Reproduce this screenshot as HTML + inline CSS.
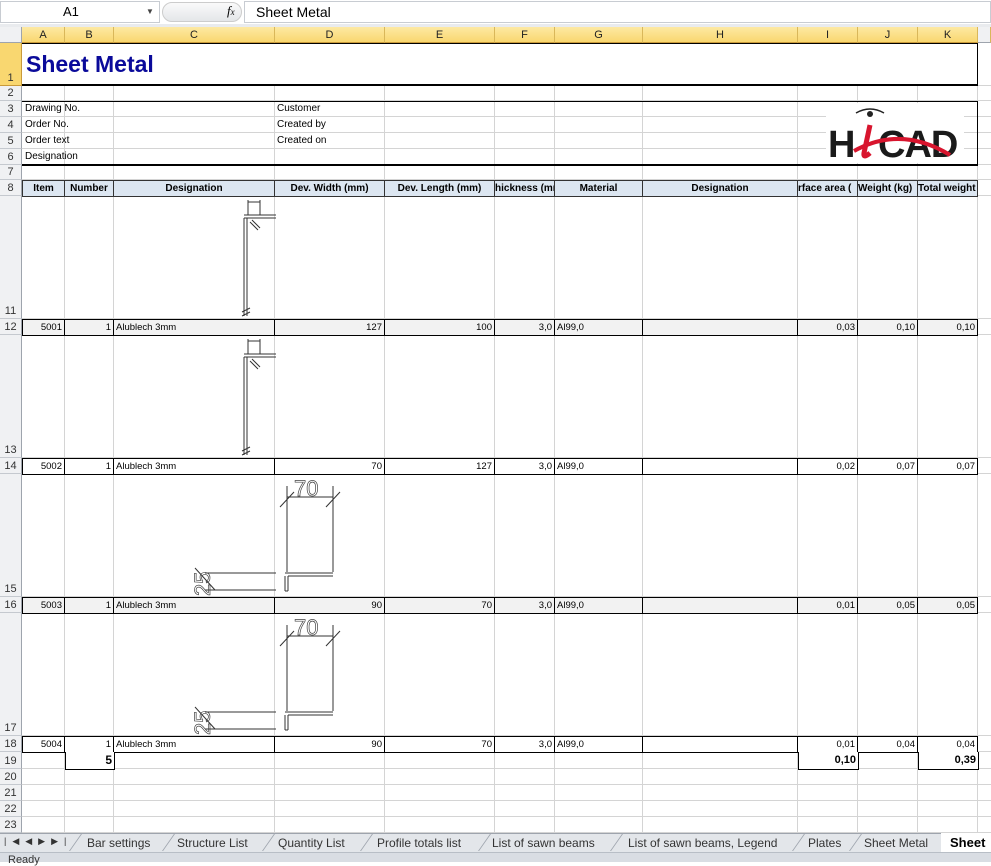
<!DOCTYPE html>
<html><head><meta charset="utf-8"><style>
*{margin:0;padding:0;box-sizing:border-box}
body{width:991px;height:862px;overflow:hidden;background:#fff;font-family:"Liberation Sans",Arial,sans-serif;position:relative}
div{position:absolute}
.v{width:1px;top:43px;height:790px;background:#d4d4d4}
.h{height:1px;left:22px;width:969px;background:#d4d4d4}
.ch{top:27px;height:16px;background:linear-gradient(#fde9a3,#f9d770);border-right:1px solid #d9b75a;border-bottom:1px solid #c99a3a;font-size:11px;color:#222;text-align:center;line-height:16px}
.rh{left:0;width:22px;background:#f0f1f3;border-bottom:1px solid #c5c9cf;border-right:1px solid #9ea4ad;font-size:11px;color:#333;text-align:center;display:flex;align-items:flex-end;justify-content:center;padding-bottom:1px}
.t{font-size:10px;color:#000;white-space:nowrap;line-height:16px}
.hd{top:180px;height:17px;background:#dce6f1;border:1px solid #333;border-left:none;font-size:10px;font-weight:bold;text-align:center;line-height:15px;overflow:hidden;white-space:nowrap}
.dc{height:17px;border:1px solid #000;border-left:none;font-size:9.5px;line-height:15px;padding:0 2px;white-space:nowrap;overflow:hidden;background:#fff}
.g{background:#f2f2f2}
.r{text-align:right}
.tab{top:835px;height:16px;font-size:12px;color:#333;line-height:16px}
.sep{top:834px;width:1px;height:17px;background:#9ea4ad;transform:skewX(-35deg)}
</style></head><body>
<div style="left:0;top:0;width:991px;height:27px;background:#fff;border-bottom:1px solid #c6cbd2"></div>
<div style="left:0;top:1px;width:160px;height:22px;border:1px solid #c8ccd2;font-size:13px;line-height:20px;padding-left:62px">A1</div>
<div style="left:146px;top:7px;font-size:8px;color:#444">▼</div>
<div style="left:162px;top:2px;width:80px;height:20px;border-radius:10px;background:linear-gradient(#fafafa,#e4e6e9);border:1px solid #ccc"></div>
<div style="left:227px;top:3px;font-family:'Liberation Serif',serif;font-style:italic;font-size:13px">f<span style="font-size:9px">x</span></div>
<div style="left:244px;top:1px;width:747px;height:22px;border:1px solid #c8ccd2;font-size:14px;line-height:20px;padding-left:11px">Sheet Metal</div>
<div style="left:0;top:24px;width:991px;height:3px;background:#e9ebee"></div>
<div style="left:0;top:27px;width:22px;height:16px;background:#f0f1f3;border-right:1px solid #9ea4ad;border-bottom:1px solid #9ea4ad"></div>
<div class="ch" style="left:22px;width:43px">A</div>
<div class="ch" style="left:65px;width:49px">B</div>
<div class="ch" style="left:114px;width:161px">C</div>
<div class="ch" style="left:275px;width:110px">D</div>
<div class="ch" style="left:385px;width:110px">E</div>
<div class="ch" style="left:495px;width:60px">F</div>
<div class="ch" style="left:555px;width:88px">G</div>
<div class="ch" style="left:643px;width:155px">H</div>
<div class="ch" style="left:798px;width:60px">I</div>
<div class="ch" style="left:858px;width:60px">J</div>
<div class="ch" style="left:918px;width:60px">K</div>
<div class="ch" style="left:978px;width:13px;background:#f0f1f3;border-bottom-color:#9ea4ad"></div>
<div class="v" style="left:64px"></div><div class="v" style="left:113px"></div><div class="v" style="left:274px"></div><div class="v" style="left:384px"></div><div class="v" style="left:494px"></div><div class="v" style="left:554px"></div><div class="v" style="left:642px"></div><div class="v" style="left:797px"></div><div class="v" style="left:857px"></div><div class="v" style="left:917px"></div><div class="v" style="left:977px"></div>
<div class="h" style="top:85px"></div><div class="h" style="top:100px"></div><div class="h" style="top:116px"></div><div class="h" style="top:132px"></div><div class="h" style="top:148px"></div><div class="h" style="top:164px"></div><div class="h" style="top:179px"></div><div class="h" style="top:195px"></div><div class="h" style="top:318px"></div><div class="h" style="top:334px"></div><div class="h" style="top:457px"></div><div class="h" style="top:473px"></div><div class="h" style="top:596px"></div><div class="h" style="top:612px"></div><div class="h" style="top:735px"></div><div class="h" style="top:751px"></div><div class="h" style="top:768px"></div><div class="h" style="top:784px"></div><div class="h" style="top:800px"></div><div class="h" style="top:816px"></div><div class="h" style="top:832px"></div>
<div class="rh" style="top:43px;height:43px;background:#f9d770;border-bottom-color:#c99a3a;border-right-color:#c99a3a">1</div>
<div class="rh" style="top:86px;height:15px">2</div>
<div class="rh" style="top:101px;height:16px">3</div>
<div class="rh" style="top:117px;height:16px">4</div>
<div class="rh" style="top:133px;height:16px">5</div>
<div class="rh" style="top:149px;height:16px">6</div>
<div class="rh" style="top:165px;height:15px">7</div>
<div class="rh" style="top:180px;height:16px">8</div>
<div class="rh" style="top:196px;height:123px">11</div>
<div class="rh" style="top:319px;height:16px">12</div>
<div class="rh" style="top:335px;height:123px">13</div>
<div class="rh" style="top:458px;height:16px">14</div>
<div class="rh" style="top:474px;height:123px">15</div>
<div class="rh" style="top:597px;height:16px">16</div>
<div class="rh" style="top:613px;height:123px">17</div>
<div class="rh" style="top:736px;height:16px">18</div>
<div class="rh" style="top:752px;height:17px">19</div>
<div class="rh" style="top:769px;height:16px">20</div>
<div class="rh" style="top:785px;height:16px">21</div>
<div class="rh" style="top:801px;height:16px">22</div>
<div class="rh" style="top:817px;height:16px">23</div>
<div style="left:22px;top:43px;width:956px;height:43px;background:#fff;border:1px solid #000;border-left:none;border-bottom:2px solid #000"></div>
<div style="left:26px;top:51px;font-size:23px;font-weight:bold;color:#0a0a9a">Sheet Metal</div>
<div style="left:22px;top:101px;width:956px;height:65px;border:1px solid #000;border-left:none;border-bottom:2px solid #000"></div>
<div class="t" style="left:25px;top:101px">Drawing No.</div>
<div class="t" style="left:25px;top:117px">Order No.</div>
<div class="t" style="left:25px;top:133px">Order text</div>
<div class="t" style="left:25px;top:149px">Designation</div>
<div class="t" style="left:277px;top:101px">Customer</div>
<div class="t" style="left:277px;top:117px">Created by</div>
<div class="t" style="left:277px;top:133px">Created on</div>
<div style="left:826px;top:103px;width:138px;height:60px;background:#fff">
<svg width="138" height="60" viewBox="0 0 138 60">
<path d="M30 10 Q44 2 58 10" stroke="#222" stroke-width="1.5" fill="none"/>
<circle cx="44" cy="11" r="3" fill="#222"/>
<text x="2" y="54" font-family="Liberation Sans" font-weight="bold" font-size="38" fill="#1a1a1a" transform="scale(1 1)">H</text>
<path d="M44 22 L38 50 Q37 56 44 50" stroke="#d8152e" stroke-width="5" fill="none"/>
<text x="52" y="54" font-family="Liberation Sans" font-weight="bold" font-size="38" fill="#1a1a1a" letter-spacing="-1">CAD</text>
<path d="M28 48 Q75 22 124 52" stroke="#d8152e" stroke-width="4" fill="none"/>
</svg></div>
<div class="hd" style="left:22px;width:43px;border-left:1px solid #333">Item</div>
<div class="hd" style="left:65px;width:49px">Number</div>
<div class="hd" style="left:114px;width:161px">Designation</div>
<div class="hd" style="left:275px;width:110px">Dev. Width (mm)</div>
<div class="hd" style="left:385px;width:110px">Dev. Length (mm)</div>
<div class="hd" style="left:495px;width:60px;text-align:left">hickness (mı</div>
<div class="hd" style="left:555px;width:88px">Material</div>
<div class="hd" style="left:643px;width:155px">Designation</div>
<div class="hd" style="left:798px;width:60px;text-align:left">rface area (</div>
<div class="hd" style="left:858px;width:60px;text-align:left">Weight (kg)</div>
<div class="hd" style="left:918px;width:60px;text-align:left">Total weight</div>
<div class="dc r g" style="left:22px;top:319px;width:43px;border-left:1px solid #000">5001</div><div class="dc r g" style="left:65px;top:319px;width:49px">1</div><div class="dc g" style="left:114px;top:319px;width:161px">Alublech 3mm</div><div class="dc r g" style="left:275px;top:319px;width:110px">127</div><div class="dc r g" style="left:385px;top:319px;width:110px">100</div><div class="dc r g" style="left:495px;top:319px;width:60px">3,0</div><div class="dc g" style="left:555px;top:319px;width:88px">Al99,0</div><div class="dc g" style="left:643px;top:319px;width:155px"></div><div class="dc r g" style="left:798px;top:319px;width:60px">0,03</div><div class="dc r g" style="left:858px;top:319px;width:60px">0,10</div><div class="dc r g" style="left:918px;top:319px;width:60px">0,10</div>
<div class="dc r" style="left:22px;top:458px;width:43px;border-left:1px solid #000">5002</div><div class="dc r" style="left:65px;top:458px;width:49px">1</div><div class="dc" style="left:114px;top:458px;width:161px">Alublech 3mm</div><div class="dc r" style="left:275px;top:458px;width:110px">70</div><div class="dc r" style="left:385px;top:458px;width:110px">127</div><div class="dc r" style="left:495px;top:458px;width:60px">3,0</div><div class="dc" style="left:555px;top:458px;width:88px">Al99,0</div><div class="dc" style="left:643px;top:458px;width:155px"></div><div class="dc r" style="left:798px;top:458px;width:60px">0,02</div><div class="dc r" style="left:858px;top:458px;width:60px">0,07</div><div class="dc r" style="left:918px;top:458px;width:60px">0,07</div>
<div class="dc r g" style="left:22px;top:597px;width:43px;border-left:1px solid #000">5003</div><div class="dc r g" style="left:65px;top:597px;width:49px">1</div><div class="dc g" style="left:114px;top:597px;width:161px">Alublech 3mm</div><div class="dc r g" style="left:275px;top:597px;width:110px">90</div><div class="dc r g" style="left:385px;top:597px;width:110px">70</div><div class="dc r g" style="left:495px;top:597px;width:60px">3,0</div><div class="dc g" style="left:555px;top:597px;width:88px">Al99,0</div><div class="dc g" style="left:643px;top:597px;width:155px"></div><div class="dc r g" style="left:798px;top:597px;width:60px">0,01</div><div class="dc r g" style="left:858px;top:597px;width:60px">0,05</div><div class="dc r g" style="left:918px;top:597px;width:60px">0,05</div>
<div class="dc r" style="left:22px;top:736px;width:43px;border-left:1px solid #000">5004</div><div class="dc r" style="left:65px;top:736px;width:49px">1</div><div class="dc" style="left:114px;top:736px;width:161px">Alublech 3mm</div><div class="dc r" style="left:275px;top:736px;width:110px">90</div><div class="dc r" style="left:385px;top:736px;width:110px">70</div><div class="dc r" style="left:495px;top:736px;width:60px">3,0</div><div class="dc" style="left:555px;top:736px;width:88px">Al99,0</div><div class="dc" style="left:643px;top:736px;width:155px"></div><div class="dc r" style="left:798px;top:736px;width:60px">0,01</div><div class="dc r" style="left:858px;top:736px;width:60px">0,04</div><div class="dc r" style="left:918px;top:736px;width:60px">0,04</div>
<div class="dc r" style="left:65px;top:752px;width:50px;height:18px;border-left:1px solid #000;border-top:none;font-size:12px;font-weight:bold;line-height:16px">5</div>
<div class="dc r" style="left:798px;top:752px;width:61px;height:18px;border-left:1px solid #000;border-top:none;font-size:11px;font-weight:bold;line-height:16px">0,10</div>
<div class="dc r" style="left:918px;top:752px;width:61px;height:18px;border-left:1px solid #000;border-top:none;font-size:11px;font-weight:bold;line-height:16px">0,39</div>
<svg style="position:absolute;left:0;top:0" width="991" height="862">
<g stroke="#333" stroke-width="1" fill="none">
<g id="d1">
<path d="M244 218 V316 M247 218 V316 M244 218 H262 M244 215 H262"/>
<path d="M248 200 V215 M260 200 V215 M248 202 H260 M262 218 H276 M262 215 H276"/>
<path d="M250 222 L258 230 M252 220 L260 228 M242 312 L250 308 M242 316 L250 312"/>
</g>
<use href="#d1" y="139"/>
<g id="d2">
<path d="M287 486 V572 M333 486 V572 M287 497 H333 M280 507 L294 492 M326 507 L340 492"/>
<path d="M285 573 H333 M285 576 V591 M288 576 V591 M285 591 H288 M288 576 H333"/>
<path d="M205 573 H276 M205 590 H276 M195 568 L215 590"/>
</g>
<use href="#d2" y="139"/>
</g>
<g font-family="Liberation Sans" font-size="22" fill="none" stroke="#444" stroke-width="0.7">
<text x="294" y="496">70</text><text x="294" y="635">70</text>
<text x="210" y="596" transform="rotate(-90 210 596)">25</text>
<text x="210" y="735" transform="rotate(-90 210 735)">25</text>
</g>
</svg>
<div style="left:0;top:833px;width:991px;height:19px;background:#e3e6ea;border-top:1px solid #9ea4ad"></div>
<div style="left:4px;top:836px;font-size:9px;color:#333;letter-spacing:6px">|◀◀▶▶|</div>
<div class="sep" style="left:75px"></div><div class="sep" style="left:168px"></div><div class="sep" style="left:268px"></div><div class="sep" style="left:366px"></div><div class="sep" style="left:484px"></div><div class="sep" style="left:616px"></div><div class="sep" style="left:798px"></div><div class="sep" style="left:855px"></div>
<div class="tab" style="left:87px">Bar settings</div>
<div class="tab" style="left:177px">Structure List</div>
<div class="tab" style="left:278px">Quantity List</div>
<div class="tab" style="left:377px">Profile totals list</div>
<div class="tab" style="left:492px">List of sawn beams</div>
<div class="tab" style="left:628px">List of sawn beams, Legend</div>
<div class="tab" style="left:808px">Plates</div>
<div class="tab" style="left:864px">Sheet Metal</div>
<div style="left:941px;top:833px;width:50px;height:19px;background:#fff;font-size:13px;font-weight:bold;line-height:19px;padding-left:9px">Sheet</div>
<div style="left:0;top:852px;width:991px;height:10px;background:#d9dde3;border-top:1px solid #b8bec6"></div>
<div style="left:8px;top:854px;font-size:11px;color:#333">Ready</div>
</body></html>
